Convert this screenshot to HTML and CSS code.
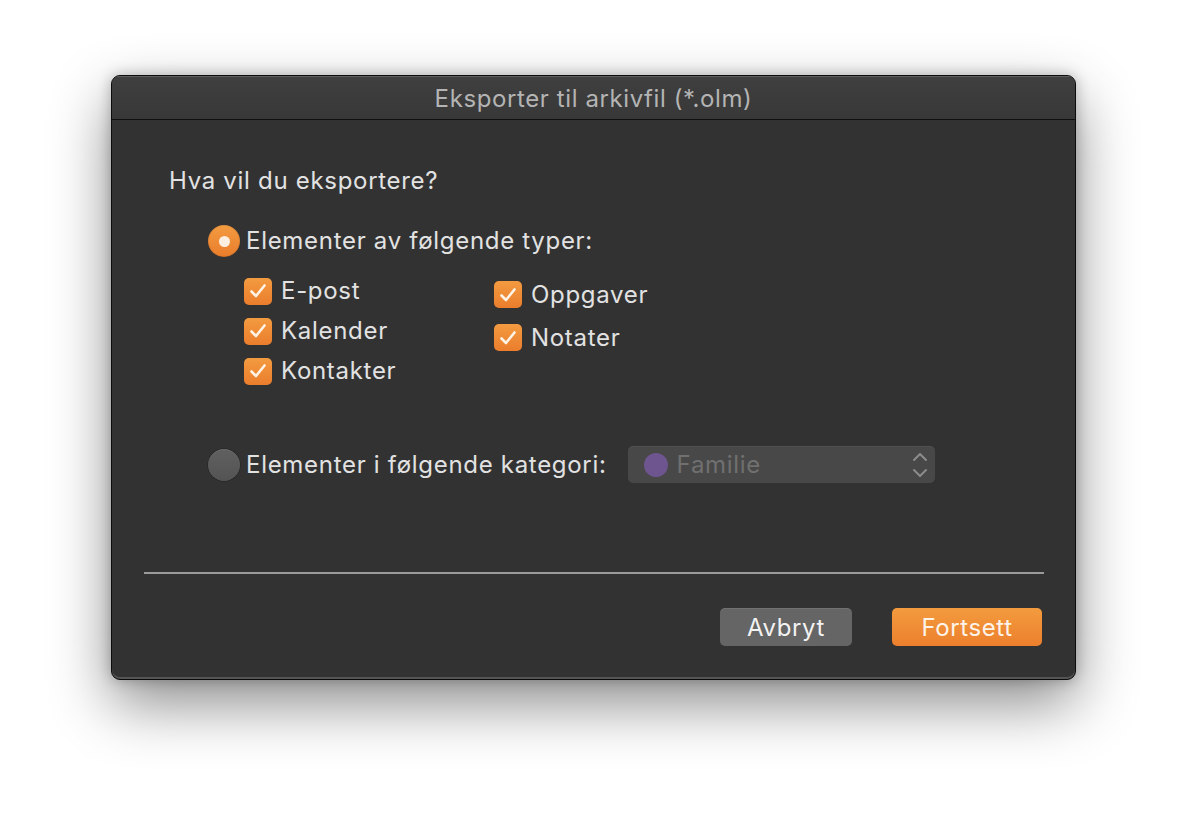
FILE: index.html
```html
<!DOCTYPE html>
<html lang="no">
<head>
<meta charset="utf-8">
<title>Eksporter til arkivfil</title>
<link rel="stylesheet" href="styles.css">
</head>
<body>
<div class="window">
  <div class="titlebar">Eksporter til arkivfil (*.olm)</div>
  <div class="content">
    <div class="question">Hva vil du eksportere?</div>
    <div class="option option-types">
      <span class="radio radio-on"><span class="dot"></span></span>
      <span class="label">Elementer av følgende typer:</span>
    </div>
    <div class="checks">
      <div class="col col1">
        <div class="check-row"><span class="checkbox"><svg viewBox="0 0 28 28"><path d="M7.5 14.5 L12 19 L20.5 8.5" /></svg></span><span class="label">E-post</span></div>
        <div class="check-row"><span class="checkbox"><svg viewBox="0 0 28 28"><path d="M7.5 14.5 L12 19 L20.5 8.5" /></svg></span><span class="label">Kalender</span></div>
        <div class="check-row"><span class="checkbox"><svg viewBox="0 0 28 28"><path d="M7.5 14.5 L12 19 L20.5 8.5" /></svg></span><span class="label">Kontakter</span></div>
      </div>
      <div class="col col2">
        <div class="check-row"><span class="checkbox"><svg viewBox="0 0 28 28"><path d="M7.5 14.5 L12 19 L20.5 8.5" /></svg></span><span class="label">Oppgaver</span></div>
        <div class="check-row"><span class="checkbox"><svg viewBox="0 0 28 28"><path d="M7.5 14.5 L12 19 L20.5 8.5" /></svg></span><span class="label">Notater</span></div>
      </div>
    </div>
    <div class="option option-category">
      <span class="radio radio-off"></span>
      <span class="label">Elementer i følgende kategori:</span>
      <div class="popup">
        <span class="swatch"></span>
        <span class="popup-text">Familie</span>
        <svg class="chevrons" viewBox="0 0 16 30"><path d="M2 10 L8 4 L14 10" /><path d="M2 20 L8 26 L14 20" /></svg>
      </div>
    </div>
    <div class="separator"></div>
    <div class="buttons">
      <button class="btn btn-cancel">Avbryt</button>
      <button class="btn btn-primary">Fortsett</button>
    </div>
  </div>
</div>
</body>
</html>
```

FILE: styles.css
```css
* { box-sizing: border-box; }

html, body {
  margin: 0;
  padding: 0;
  background: #ffffff;
}

body {
  width: 1188px;
  height: 828px;
  overflow: hidden;
  font-family: Inter, "Liberation Sans", sans-serif;
  padding-top: 75px;
  padding-left: 111px;
}

.window {
  width: 965px;
  height: 605px;
  background: #323232;
  border: 1px solid #0c0c0c;
  border-radius: 9px;
  box-shadow: inset 0 1px 0 #5c5c5c, inset 0 -2px 0 #555,
              0 24px 60px rgba(0,0,0,0.45), 0 0 14px rgba(0,0,0,0.25);
  display: flex;
  flex-direction: column;
  overflow: hidden;
}

.titlebar {
  height: 44px;
  flex: none;
  border-bottom: 1px solid #0f0f0f;
  background: linear-gradient(#3f3f3f, #383838);
  border-top: 1px solid #5e5e5e;
  color: #b4b4b4;
  font-size: 24px;
  letter-spacing: 0.6px;
  display: flex;
  align-items: center;
  justify-content: center;
  padding-top: 1px;
}

.content {
  flex: 1;
  display: flex;
  flex-direction: column;
  padding: 0 31px 0 32px;
}

.question {
  color: #e2e2e2;
  font-size: 24px;
  letter-spacing: 0.7px;
  line-height: 28px;
  margin-top: 47px;
  padding-left: 25px;
}

.option {
  display: flex;
  align-items: center;
  padding-left: 64px;
}

.option-types {
  margin-top: 30px;
  height: 32px;
}

.label {
  color: #e2e2e2;
  font-size: 24px;
  letter-spacing: 0.7px;
  line-height: 28px;
}

.radio {
  width: 32px;
  height: 32px;
  border-radius: 50%;
  flex: none;
  margin-right: 6px;
  display: flex;
  align-items: center;
  justify-content: center;
}

.radio-on {
  background: linear-gradient(#f39c42, #ea7c2b);
  box-shadow: inset 0 0 0 1px rgba(0,0,0,0.08);
}

.radio-on .dot {
  width: 11px;
  height: 11px;
  border-radius: 50%;
  background: #fdefdf;
}

.radio-off {
  background: linear-gradient(#606060, #545454);
  box-shadow: inset 0 1px 0 rgba(255,255,255,0.08), 0 0 0 0.5px rgba(0,0,0,0.4);
}

.checks {
  display: flex;
  margin-top: 14px;
  padding-left: 100px;
}

.col1 { width: 250px; }
.col2 { margin-top: 2px; }

.check-row {
  display: flex;
  align-items: center;
  height: 40px;
}

.col2 .check-row { height: 43px; }

.checkbox {
  width: 28px;
  height: 27px;
  border-radius: 5px;
  background: linear-gradient(#f39b41, #eb7d2c);
  margin-right: 9px;
  flex: none;
  display: flex;
  align-items: center;
  justify-content: center;
}

.checkbox svg {
  width: 28px;
  height: 28px;
}

.checkbox path {
  fill: none;
  stroke: #fff3e6;
  stroke-width: 2.6;
  stroke-linecap: round;
  stroke-linejoin: round;
}

.option-category {
  margin-top: 55px;
  height: 37px;
}

.popup {
  margin-left: 21px;
  width: 307px;
  height: 37px;
  border-radius: 5px;
  background: #484848;
  box-shadow: inset 0 1px 0 rgba(255,255,255,0.05);
  display: flex;
  align-items: center;
  padding: 0 7px 0 16px;
}

.swatch {
  width: 24px;
  height: 24px;
  border-radius: 50%;
  background: #6f5590;
  flex: none;
  margin-right: 9px;
}

.popup-text {
  color: #707070;
  font-size: 24px;
  letter-spacing: 0.7px;
  flex: 1;
}

.chevrons {
  width: 16px;
  height: 30px;
}

.chevrons path {
  fill: none;
  stroke: #8c8c8c;
  stroke-width: 2;
  stroke-linecap: round;
  stroke-linejoin: round;
}

.separator {
  margin-top: 89px;
  height: 2px;
  background: #9a9a9a;
}

.buttons {
  margin-top: 34px;
  display: flex;
  justify-content: flex-end;
  gap: 40px;
  padding-right: 2px;
}

.btn {
  height: 38px;
  border: none;
  border-radius: 5px;
  font-family: Inter, "Liberation Sans", sans-serif;
  font-size: 24px;
  letter-spacing: 0.6px;
  color: #f2f2f2;
  padding: 0;
}

.btn-cancel {
  width: 132px;
  background: #656565;
  box-shadow: inset 0 1px 0 rgba(255,255,255,0.08);
}

.btn-primary {
  width: 150px;
  background: linear-gradient(#f39b3e, #ec7f2d);
  color: #fdf3e8;
}
```
